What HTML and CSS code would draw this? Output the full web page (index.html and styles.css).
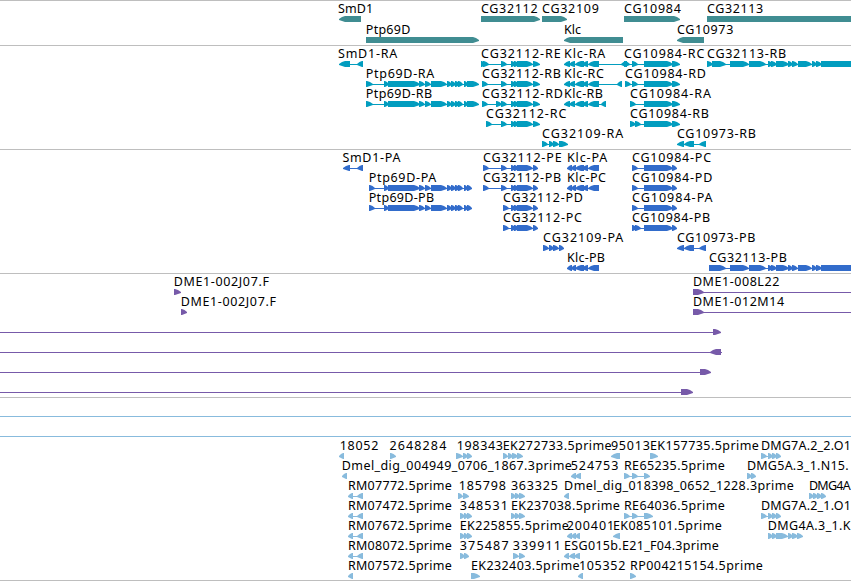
FILE: index.html
```
<!DOCTYPE html>
<html lang="en">
<head>
    <meta charset="UTF-8">
    <meta name="viewport" content="width=device-width, initial-scale=1.0">
    <title>Genome Browser</title>
    <link rel="stylesheet" href="styles.css">
</head>
<body>
    <div class="browser">
        <svg class="track genes" id="genes" width="851" height="45"></svg>
        <svg class="track transcripts" id="transcripts" width="851" height="104"></svg>
        <svg class="track proteins" id="proteins" width="851" height="124"></svg>
        <svg class="track clones" id="clones" width="851" height="124"></svg>
        <svg class="track spans" id="spans" width="851" height="40"></svg>
        <svg class="track ests" id="ests" width="851" height="144"></svg>
    </div>
    <script src="tracks.js"></script>
</body>
</html>
```
FILE: styles.css
```
body {
    margin: 0;
    background: #fff;
    overflow: hidden;
}

.browser {
    display: flex;
    flex-direction: column;
    width: 851px;
    height: 581px;
    overflow: hidden;
}

.track {
    display: block;
    flex: none;
}

.track text {
    font-family: "Noto Sans", "Open Sans", sans-serif;
    font-size: 12.5px;
    fill: #000;
}

.divider {
    fill: #bebebe;
}

.genes {
    fill: #408d92;
}

.transcripts {
    fill: #029dbf;
}

.proteins {
    fill: #326ccb;
}

.clones {
    fill: #775aa9;
}

.spans,
.ests {
    fill: #88bbdd;
}
```
FILE: tracks.js
```
const NS = 'http://www.w3.org/2000/svg';

// exon groups shared by several isoforms
const ptp = '384-389 388-420 419-425 425-431 431-447 447-452 451-456 455-460 458-463 464-468';
const cg112 = '511-516 514-519 517-522 518-533';
const klc = '575-584 582-588 588-599';
const cg113 = '730-749 749-766 768-773 771-777 776-789 788-793 792-798 798-812 812-817 816-822 821-900';

// feature: [row, label, labelStart, labelEnd, strand, exons, lineStart, lineEnd]
const genes = [
    [0, 'SmD1', 338.8, 372.5, '-', '339-361'],
    [1, 'Ptp69D', 366.6, 409.7, '+', '366-479'],
    [0, 'CG32112', 481.8, 537, '+', '481-540'],
    [0, 'CG32109', 542.8, 598.3, '+', '542-567'],
    [1, 'Klc', 564.9, 580.3, '-', '564-623'],
    [0, 'CG10984', 624.8, 680.3, '+', '624-680'],
    [1, 'CG10973', 677.8, 732.7, '-', '677-704'],
    [0, 'CG32113', 707.8, 762.5, '+', '707-900']
];

const transcripts = [
    [0, 'SmD1-RA', 338.8, 396.7, '-', '339-350 357-363'],
    [1, 'Ptp69D-RA', 366.6, 433.7, '+', '366-373 ' + ptp + ' 467-479'],
    [2, 'Ptp69D-RB', 366.6, 431.5, '+', '366-373 ' + ptp + ' 467-479'],
    [0, 'CG32112-RE', 481.9, 560, '+', '481-485 483-489 501-507 ' + cg112 + ' 533-540'],
    [1, 'CG32112-RB', 482.9, 560.3, '+', '482-488 501-507 ' + cg112 + ' 533-540'],
    [2, 'CG32112-RD', 482.9, 562.3, '+', '482-488 496-502 501-507 ' + cg112 + ' 533-540'],
    [3, 'CG32112-RC', 486.9, 565.7, '+', '486-492 501-507 ' + cg112 + ' 533-540'],
    [4, 'CG32109-RA', 542.9, 622.7, '+', '542-548 549-554 553-559 559-568'],
    [0, 'Klc-RA', 564.9, 604.7, '-', '564-570 569-575 ' + klc + ' 621-627'],
    [1, 'Klc-RC', 564.9, 603.3, '-', '564-570 569-575 ' + klc + ' 617-622'],
    [2, 'Klc-RB', 564.9, 602.3, '-', '564-570 569-575 ' + klc + ' 601-606'],
    [0, 'CG10984-RC', 624.8, 703.7, '+', '624-630 632-638 644-673 672-680'],
    [1, 'CG10984-RD', 625.9, 705.3, '+', '625-631 632-638 644-673 672-680'],
    [2, 'CG10984-RA', 630.9, 710.3, '+', '630-636 644-673 672-680'],
    [3, 'CG10984-RB', 630.9, 708.3, '+', '630-636 635-641 644-673 672-680'],
    [4, 'CG10973-RB', 677.8, 755.3, '-', '677-684 684-694 699-706'],
    [0, 'CG32113-RB', 707.8, 785.5, '+', '707-713 712-726 ' + cg113]
];

const proteins = [
    [0, 'SmD1-PA', 343.2, 399.8, '-', '343-350 357-363'],
    [1, 'Ptp69D-PA', 369.5, 435.7, '+', '369-375 ' + ptp + ' 467-472'],
    [2, 'Ptp69D-PB', 369.5, 433.5, '+', '369-375 ' + ptp + ' 467-472'],
    [0, 'CG32112-PE', 483.8, 561, '+', '483-489 501-507 ' + cg112 + ' 533-538'],
    [1, 'CG32112-PB', 483.8, 560.5, '+', '483-489 501-507 ' + cg112 + ' 533-538'],
    [2, 'CG32112-PD', 503.9, 582.3, '+', '503-509 ' + cg112 + ' 533-538'],
    [3, 'CG32112-PC', 503.9, 581.3, '+', '503-509 ' + cg112 + ' 533-538'],
    [4, 'CG32109-PA', 543.9, 622.7, '+', '543-549 549-554 553-559 559-564'],
    [0, 'Klc-PA', 567.8, 606.7, '-', '567-572 571-576 ' + klc],
    [1, 'Klc-PC', 567.8, 605.3, '-', '567-572 571-576 ' + klc],
    [5, 'Klc-PB', 567.8, 604.3, '-', '567-572 571-576 ' + klc],
    [0, 'CG10984-PC', 632.8, 710.5, '+', '632-638 644-673 672-677'],
    [1, 'CG10984-PD', 632.8, 711.7, '+', '632-638 644-673 672-677'],
    [2, 'CG10984-PA', 632.8, 712, '+', '632-638 644-673 672-677'],
    [3, 'CG10984-PB', 632.8, 709.5, '+', '632-637 635-641 644-673 672-677'],
    [4, 'CG10973-PB', 677.8, 754.7, '-', '677-684 684-694 699-706'],
    [5, 'CG32113-PB', 709.8, 786.3, '+', '709-726 ' + cg113]
];

const clones = [
    [0, 'DME1-002J07.F', 174.5, 268.3, '+', '174-181'],
    [1, 'DME1-002J07.F', 181.5, 275.3, '+', '181-187'],
    [0, 'DME1-008L22', 693.7, 778.7, '+', '693-704', 693, 851],
    [1, 'DME1-012M14', 693.7, 783.5, '+', '693-704', 693, 851],
    [2, '', 0, 0, '+', '713-721', 0, 713],
    [3, '', 0, 0, '-', '710-721', 0, 722],
    [4, '', 0, 0, '+', '700-711', 0, 700],
    [5, '', 0, 0, '+', '681-693', 0, 681]
];

const spans = [
    [0, '', 0, 0, '+', '', 0, 851],
    [1, '', 0, 0, '+', '', 0, 851]
];

const ests = [
    [0, '18052', 340.5, 377.7, '-', '339-344'],
    [0, '2648284', 390.3, 445.7, '+', '390-396'],
    [0, '198343', 457.5, 502.3, '+', '456-463 463-468 467-472'],
    [0, 'EK272733.5prime', 503.5, 611, '+', '503-508 508-513 512-518 517-523'],
    [0, '95013', 611.7, 649.3, '-', '611-620'],
    [0, 'EK157735.5prime', 650.7, 758.3, '+', '650-658'],
    [0, 'DMG7A.2_2.O1', 761.7, 850.2, '+', '761-767 768-773 772-777 776-781'],
    [1, 'Dmel_dig_004949_0706_1867.3prime', 342.6, 571.3, '-', '342-347'],
    [1, '524753', 571.5, 617.7, '-', '571-576 575-581'],
    [1, 'RE65235.5prime', 624.7, 724.3, '+', '624-630 632-638 644-650'],
    [1, 'DMG5A.3_1.N15.', 747.7, 848, '+', '747-752 751-756'],
    [2, 'RM07772.5prime', 348.7, 451.3, '-', '348-353 357-363'],
    [2, '185798', 459.5, 505.3, '+', '458-463 463-469'],
    [2, '363325', 511.7, 557.3, '+', '511-516 515-520 519-525'],
    [2, 'Dmel_dig_018398_0652_1228.3prime', 564.9, 793.3, '-', '564-569'],
    [2, 'DMG4A', 809.7, 850.2, '+', '809-814 813-818 817-822 821-826'],
    [3, 'RM07472.5prime', 348.7, 451.3, '-', '348-353 357-363'],
    [3, '348531', 460.5, 507.3, '+', '460-465 464-468 467-472'],
    [3, 'EK237038.5prime', 511.7, 619.3, '+', '511-516 515-520 519-525'],
    [3, 'RE64036.5prime', 624.7, 724.3, '+', '624-630 632-638 644-653'],
    [3, 'DMG7A.2_1.O1', 761.7, 850.2, '+', '761-767 768-773 772-777 776-781'],
    [4, 'RM07672.5prime', 348.7, 451.3, '-', '348-353 357-363'],
    [4, 'EK225855.5prime', 460.5, 568.3, '+', '460-465 464-468 467-472'],
    [4, '200401', 567.5, 613.5, '-', '567-572 571-576 575-580'],
    [4, 'EK085101.5prime', 613.7, 721.3, '-', '613-620'],
    [4, 'DMG4A.3_1.K', 768.5, 850, '+', '768-773 772-777 776-788 788-793 792-798 797-803'],
    [5, 'RM08072.5prime', 348.7, 451.3, '-', '348-353 357-363'],
    [5, '375487', 460.5, 508, '+', '460-465 464-469'],
    [5, '339911', 513.5, 560.3, '+', '513-519 519-525'],
    [5, 'ESG015b.E21_F04.3prime', 564.9, 718.3, '-', '564-569 569-575 574-580'],
    [6, 'RM07572.5prime', 348.7, 451.3, '-', '348-353'],
    [6, 'EK232403.5prime', 471.7, 579, '+', '471-480'],
    [6, '105352', 579.7, 624.7, '-', '578-583'],
    [6, 'RP004215154.5prime', 630.7, 762.3, '+', '630-636']
];

function add(parent, name, attrs) {
    const el = document.createElementNS(NS, name);
    for (const key in attrs) el.setAttribute(key, attrs[key]);
    parent.appendChild(el);
    return el;
}

// box with a blunt pointed end, short exons are all point
function drawExon(svg, start, end, strand, y) {
    const head = Math.min(end - start - 1, 6);
    const dir = strand === '+' ? 1 : -1;
    const tip = strand === '+' ? end : start;
    const back = strand === '+' ? start : end;
    const neck = tip - dir * head;
    const mid = tip - dir * head / 2;
    const points = [
        [back, y], [neck, y], [mid, y + 1], [tip, y + 3],
        [tip, y + 4], [mid, y + 5], [neck, y + 6], [back, y + 6]
    ];
    add(svg, 'polygon', { points: points.join(' ') });
}

function drawTrack(id, features, rowHeight, divider) {
    const svg = document.getElementById(id);
    if (divider) add(svg, 'rect', { class: 'divider', x: 0, y: 0, width: 851, height: 1 });

    features.forEach(([row, label, x1, x2, strand, exonText, from, to]) => {
        const top = row * rowHeight;
        const exons = exonText ? exonText.split(' ').map(e => e.split('-').map(Number)) : [];
        if (from === undefined) {
            from = exons[0][0];
            to = exons[exons.length - 1][1];
        }
        add(svg, 'rect', { x: from, y: top + 19, width: to - from, height: 1 });
        exons.forEach(([start, end]) => drawExon(svg, start, end, strand, top + 16));

        if (label) {
            const text = add(svg, 'text', { x: x1 - 0.8, y: top + 13, textLength: x2 - x1 + 1.4 });
            text.textContent = label;
        }
    });
}

drawTrack('genes', genes, 21, true);
drawTrack('transcripts', transcripts, 20, true);
drawTrack('proteins', proteins, 20, true);
drawTrack('clones', clones, 20, true);
drawTrack('spans', spans, 20, true);
drawTrack('ests', ests, 20, false);
add(document.getElementById('ests'), 'rect', { class: 'divider', x: 0, y: 143, width: 851, height: 1 });
```
